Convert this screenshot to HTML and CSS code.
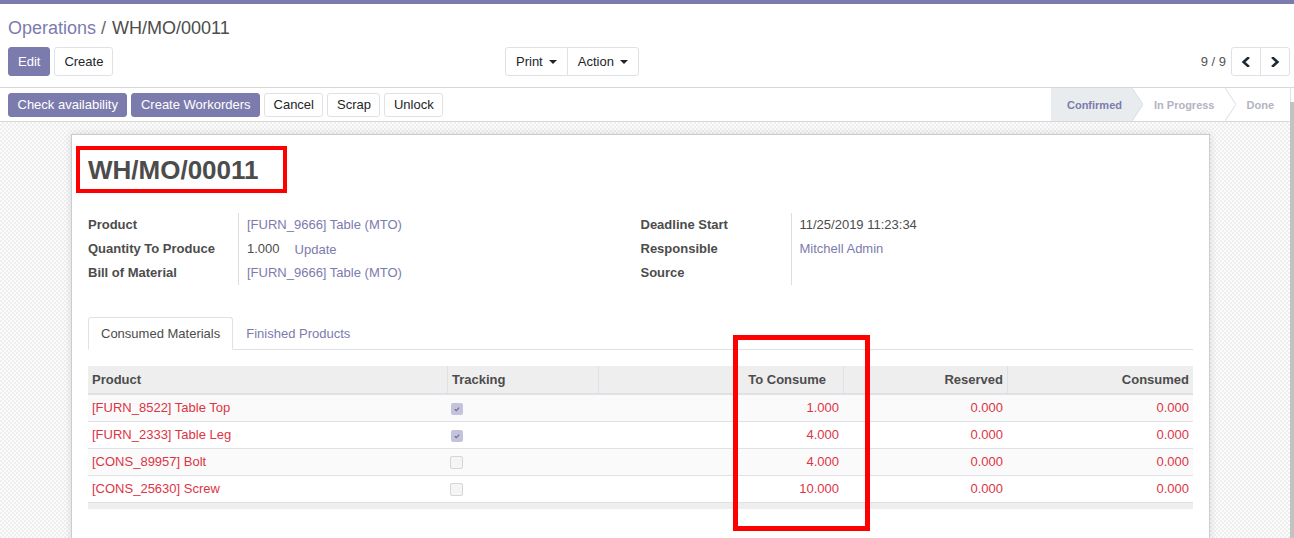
FILE: index.html
```html
<!DOCTYPE html>
<html>
<head>
<meta charset="utf-8">
<title>WH/MO/00011</title>
<link rel="stylesheet" href="styles.css">
</head>
<body>
<div class="app">
  <div class="topbar"></div>
  <div class="cp">
    <div class="breadcrumb"><a class="bc-link">Operations</a><span class="bc-sep">/</span><span class="bc-active">WH/MO/00011</span></div>
    <div class="cp-bottom">
      <div class="cp-buttons">
        <button class="btn primary">Edit</button>
        <button class="btn">Create</button>
      </div>
      <div class="btn-group">
        <button class="btn dd">Print<span class="caret"></span></button>
        <button class="btn dd">Action<span class="caret"></span></button>
      </div>
      <div class="cp-pager">
        <span class="pager-value">9 / 9</span>
        <div class="btn-group">
          <button class="btn icon"><svg viewBox="0 0 10 10" width="10" height="10"><path d="M7 1 L2.6 5 L7 9" /></svg></button>
          <button class="btn icon"><svg viewBox="0 0 10 10" width="10" height="10"><path d="M3 1 L7.4 5 L3 9" /></svg></button>
        </div>
      </div>
    </div>
  </div>
  <div class="main">
    <div class="content">
      <div class="statusbar">
        <div class="sb-buttons">
          <button class="btn sm primary">Check availability</button>
          <button class="btn sm primary">Create Workorders</button>
          <button class="btn sm">Cancel</button>
          <button class="btn sm">Scrap</button>
          <button class="btn sm">Unlock</button>
        </div>
        <div class="sb-status">
          <div class="step current">Confirmed</div>
          <svg class="chev" viewBox="0 0 11 33"><polygon class="chev-fill" points="0,0 11,16.5 0,33"/><polyline class="chev-line" points="0,0 11,16.5 0,33"/></svg>
          <div class="step mid">In Progress</div>
          <svg class="chev" viewBox="0 0 11 33"><polyline class="chev-line" points="0,0 11,16.5 0,33"/></svg>
          <div class="step last">Done</div>
        </div>
      </div>
      <div class="sheet-bg">
        <div class="sheet">
          <h1 class="title">WH/MO/00011</h1>
          <div class="groups">
            <div class="grp">
              <div class="lbl">Product</div><div class="val"><a class="link">[FURN_9666] Table (MTO)</a></div>
              <div class="lbl">Quantity To Produce</div><div class="val">1.000<a class="link update">Update</a></div>
              <div class="lbl">Bill of Material</div><div class="val"><a class="link">[FURN_9666] Table (MTO)</a></div>
            </div>
            <div class="grp">
              <div class="lbl">Deadline Start</div><div class="val">11/25/2019 11:23:34</div>
              <div class="lbl">Responsible</div><div class="val"><a class="link">Mitchell Admin</a></div>
              <div class="lbl">Source</div><div class="val"></div>
            </div>
          </div>
          <ul class="tabs">
            <li><a class="tab active">Consumed Materials</a></li>
            <li><a class="tab">Finished Products</a></li>
          </ul>
          <table class="list">
            <colgroup><col class="c1"><col class="c2"><col class="c3"><col class="c4"><col class="c5"></colgroup>
            <thead>
              <tr><th>Product</th><th>Tracking</th><th class="num tc">To Consume</th><th class="num">Reserved</th><th class="num">Consumed</th></tr>
            </thead>
            <tbody>
              <tr><td>[FURN_8522] Table Top</td><td><span class="cb on"><svg viewBox="0 0 12 12" width="12" height="12"><path d="M3.8 6.2 L5.3 7.6 L8.2 4.6"/></svg></span></td><td class="num">1.000</td><td class="num">0.000</td><td class="num">0.000</td></tr>
              <tr><td>[FURN_2333] Table Leg</td><td><span class="cb on"><svg viewBox="0 0 12 12" width="12" height="12"><path d="M3.8 6.2 L5.3 7.6 L8.2 4.6"/></svg></span></td><td class="num">4.000</td><td class="num">0.000</td><td class="num">0.000</td></tr>
              <tr><td>[CONS_89957] Bolt</td><td><span class="cb off"></span></td><td class="num">4.000</td><td class="num">0.000</td><td class="num">0.000</td></tr>
              <tr><td>[CONS_25630] Screw</td><td><span class="cb off"></span></td><td class="num">10.000</td><td class="num">0.000</td><td class="num">0.000</td></tr>
            </tbody>
            <tfoot><tr><td></td><td></td><td></td><td></td><td></td></tr></tfoot>
          </table>
          <div class="mark mark-title"></div>
          <div class="mark mark-col"></div>
        </div>
      </div>
    </div>
    <div class="scrollbar"><div class="thumb"></div></div>
  </div>
</div>
</body>
</html>
```

FILE: styles.css
```css
* { box-sizing: border-box; }
html, body { margin: 0; height: 100%; overflow: hidden; }
body {
  font-family: "Liberation Sans", Arial, sans-serif;
  font-size: 13px;
  color: #4c4c4c;
  background: #fff;
}
.app { display: flex; flex-direction: column; height: 538px; }
.topbar { flex: none; height: 4px; background: #7c7bad; }

.cp { flex: none; padding: 12px 4px 11px 8px; border-bottom: 1px solid #d6d8dc; }
.breadcrumb { font-size: 18px; line-height: 24px; white-space: nowrap; }
.bc-link { color: #7c7bad; }
.bc-sep { color: #666; margin: 0 6px 0 5px; }
.bc-active { color: #4c4c4c; }

.cp-bottom { display: flex; align-items: center; margin-top: 7px; height: 29px; }
.cp-buttons { display: flex; gap: 4px; width: 497px; }
.cp-pager { margin-left: auto; display: flex; align-items: center; gap: 5px; }
.pager-value { color: #555; }

.btn {
  font: inherit;
  font-size: 13px;
  line-height: 19px;
  padding: 4px 9px;
  border: 1px solid #dee2e6;
  background: #fff;
  color: #212529;
  border-radius: 3px;
  white-space: nowrap;
  cursor: pointer;
}
.btn.primary { background: #7c7bad; border-color: #7c7bad; color: #fff; }
.btn.sm { line-height: 18px; padding: 2px 8.5px; }
.btn-group { display: flex; }
.btn-group .btn { border-radius: 0; }
.btn-group .btn:first-child { border-radius: 3px 0 0 3px; }
.btn-group .btn:last-child { border-radius: 0 3px 3px 0; }
.btn-group .btn + .btn { margin-left: -1px; }
.btn.dd { padding: 4px 10px; }
.caret {
  display: inline-block;
  margin-left: 6px;
  vertical-align: 2px;
  border-top: 4px solid #212529;
  border-left: 4px solid transparent;
  border-right: 4px solid transparent;
}
.btn.icon { width: 30px; height: 29px; padding: 0; display: flex; align-items: center; justify-content: center; }
.btn.icon svg path { fill: none; stroke: #1d2935; stroke-width: 2.6; stroke-linecap: square; stroke-linejoin: miter; }

.main { flex: 1; display: flex; min-height: 0; }
.content { flex: 1; display: flex; flex-direction: column; overflow: hidden; }
.scrollbar {
  width: 4px;
  display: flex;
  flex-direction: column;
  background: linear-gradient(to right, #e2e2e2 1px, #fff 1px);
}
.thumb { margin-top: 14px; flex: 1; background: #c2c2c2; }

.statusbar {
  flex: none;
  height: 34px;
  display: flex;
  justify-content: space-between;
  align-items: stretch;
  padding-left: 8px;
  border-bottom: 1px solid #d6d8dc;
  background: #fff;
}
.sb-buttons { display: flex; align-items: center; gap: 4px; }
.sb-status { display: flex; align-items: stretch; }
.step {
  display: flex;
  align-items: center;
  padding: 0 11px;
  font-size: 11px;
  font-weight: bold;
  color: #b3b3c2;
  white-space: nowrap;
}
.step.current { background: #e9ecef; color: #7c7bad; padding: 0 10px 0 16px; }
.step.mid { padding: 0 10px 0 11px; }
.step.last { padding-right: 16px; }
.chev { flex: none; width: 11px; height: 33px; display: block; }
.chev-fill { fill: #e9ecef; }
.chev-line { fill: none; stroke: #d9dce2; stroke-width: 1; }

.sheet-bg {
  flex: 1;
  padding-top: 12px;
  overflow: hidden;
  background-color: #f7f7f7;
  background-image: repeating-conic-gradient(#efefef 0 25%, #fbfbfb 0 50%);
  background-size: 4px 4px;
}
.sheet {
  position: relative;
  margin-left: 71px;
  width: 1139px;
  min-height: 520px;
  padding: 16px;
  background: #fff;
  border: 1px solid #c9ccd2;
  box-shadow: 0 0 8px rgba(0, 0, 0, 0.12);
}
.title { margin: 0; font-size: 26px; line-height: 38px; font-weight: bold; color: #4c4c4c; }

.groups { display: grid; grid-template-columns: 1fr 1fr; margin-top: 24px; }
.grp { display: grid; grid-template-columns: 150px 1fr; }
.lbl { font-weight: bold; line-height: 24px; color: #4c4c4c; white-space: nowrap; }
.val { min-height: 24px; line-height: 24px; padding-left: 8px; border-left: 1px solid #dddddd; }
.link { color: #7c7bad; }
.update { margin-left: 15px; position: relative; top: 1px; }

.tabs {
  list-style: none;
  margin: 32px 0 0;
  padding: 0;
  display: flex;
  border-bottom: 1px solid #dee2e6;
}
.tabs li { margin-bottom: -1px; }
.tab {
  display: block;
  padding: 7px 12px 6px;
  line-height: 18px;
  border: 1px solid transparent;
  border-radius: 3px 3px 0 0;
  color: #7c7bad;
}
.tab.active { color: #4c4c4c; background: #fff; border-color: #dee2e6 #dee2e6 #fff; }

.list {
  width: 100%;
  margin-top: 16px;
  table-layout: fixed;
  border-collapse: separate;
  border-spacing: 0;
}
.c1 { width: 359px; }
.c2 { width: 151px; }
.c3 { width: 245px; }
.c4 { width: 164px; }
.c5 { width: 186px; }
.list th {
  background: #eeeeee;
  font-weight: bold;
  text-align: left;
  color: #4c4c4c;
  padding: 5px 4px 4px;
  line-height: 18px;
  border-bottom: 2px solid #dee2e6;
  white-space: nowrap;
}
.list th + th { border-left: 1px solid #dee2e6; }
.list td {
  padding: 4px;
  line-height: 18px;
  color: #dc3545;
  border-bottom: 1px solid #dee2e6;
  white-space: nowrap;
}
.list tbody tr:nth-child(odd) td { background: #fafafa; }
.list .num { text-align: right; }
.list th.tc { padding-right: 17px; }
.list tfoot td { height: 6px; padding: 0; background: #eeeeee; border: 0; }

.cb { display: inline-block; vertical-align: middle; border-radius: 2px; }
.cb.on { width: 12px; height: 12px; background: #c4c3dc; }
.cb.on svg { display: block; }
.cb.on path { fill: none; stroke: #6d6c96; stroke-width: 1.2; }
.cb.off { width: 13px; height: 13px; margin-left: -1px; background: #f5f5f5; border: 1px solid #d6d6d6; }

.mark { position: absolute; border: 4px solid #ff0000; pointer-events: none; }
.mark-title { left: 4px; top: 11px; width: 211px; height: 47px; }
.mark-col { left: 661px; top: 200px; width: 137px; height: 196px; border-width: 5px; }
```
